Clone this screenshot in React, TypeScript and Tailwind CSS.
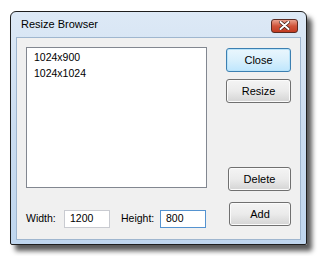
const Button = ({ label, focused }: { label: string; focused?: boolean }) => (
  <button
    className={`flex h-[24px] w-full items-center justify-center rounded-[3px] border text-[11px] text-black ${
      focused
        ? "border-[#3c7fb1] bg-gradient-to-b from-[#eaf6fd] via-[#d9f0fc] to-[#bee6fd] shadow-[inset_0_0_0_1px_#b9e3f9]"
        : "border-[#707070] bg-gradient-to-b from-[#f4f4f4] via-[#ebebeb] to-[#d4d4d4] shadow-[inset_0_0_0_1px_#fbfbfb]"
    }`}
  >
    {label}
  </button>
);

const App = () => {
  return (
    <div className="h-[256px] w-[320px] bg-white pl-[10px] pt-[11px] font-['Liberation_Sans',Arial,sans-serif]">
      <div className="flex h-[234px] w-[297px] flex-col rounded-t-[6px] rounded-b-[2px] border border-[#1e1e1e] bg-gradient-to-b from-[#dde9f6] via-[#cadcf0] to-[#bfd6ee] shadow-[5px_6px_5px_rgba(0,0,0,0.65)]">
        <div className="flex h-[25px] items-center justify-between pl-[10px] pr-[8px]">
          <span className="text-[11px] text-black">Resize Browser</span>
          <div className="mt-[2px] flex h-[14px] w-[27px] items-center justify-center rounded-[3px] border border-[#5b2a22] bg-gradient-to-b from-[#e8a18f] via-[#d0543b] to-[#c23b22]">
            <svg width="11" height="9" viewBox="0 0 11 9">
              <path d="M1.5 1 L9.5 8 M9.5 1 L1.5 8" stroke="#3a1a14" strokeWidth="3.4" strokeLinecap="round" />
              <path d="M1.5 1 L9.5 8 M9.5 1 L1.5 8" stroke="#ffffff" strokeWidth="2" strokeLinecap="round" />
            </svg>
          </div>
        </div>
        <div className="mx-[5px] mb-[4px] flex flex-1 border border-[#9fb6cf] bg-[#f0f0f0] px-[9px] pt-[9px]">
          <div className="flex w-[181px] flex-col">
            <div className="h-[141px] border border-[#828790] bg-white px-[7px] pt-[1px] text-[10.5px] leading-[16px] text-black">
              <div>1024x900</div>
              <div>1024x1024</div>
            </div>
            <div className="mt-[22px] flex h-[18px] items-center text-[10.5px] text-black">
              <span className="w-[38px]">Width:</span>
              <div className="flex h-[18px] w-[46px] items-center border border-[#c9cbd1] bg-white px-[5px]">1200</div>
              <span className="ml-[11px] w-[39px]">Height:</span>
              <div className="flex h-[18px] w-[46px] items-center border border-[#5593d0] bg-white px-[5px]">800</div>
            </div>
          </div>
          <div className="ml-auto flex w-[65px] flex-col">
            <div className="mt-[1px]">
              <Button label="Close" focused />
            </div>
            <div className="mt-[7px]">
              <Button label="Resize" />
            </div>
            <div className="mt-[64px] ml-[2px]">
              <Button label="Delete" />
            </div>
            <div className="mt-[11px] ml-[3px]">
              <Button label="Add" />
            </div>
          </div>
        </div>
      </div>
    </div>
  );
};

export default App;
